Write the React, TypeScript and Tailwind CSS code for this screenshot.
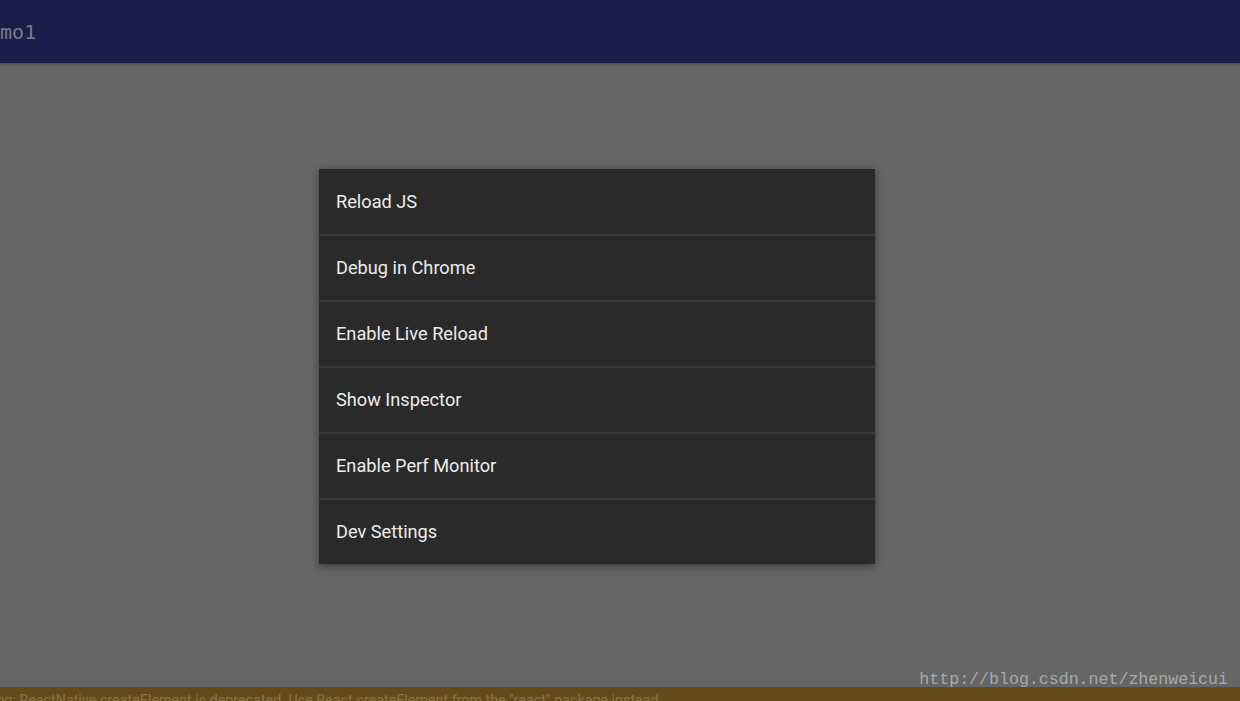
const items = [
  "Reload JS",
  "Debug in Chrome",
  "Enable Live Reload",
  "Show Inspector",
  "Enable Perf Monitor",
  "Dev Settings",
];

export default function App() {
  return (
    <div className="relative flex h-[701px] w-full flex-col overflow-hidden bg-[#666666]">
      <header className="z-10 flex h-[63px] shrink-0 items-center bg-[#1a1f4a] shadow-[0_1px_3px_rgba(0,0,0,0.35)]">
        <span className="-ml-[24px] font-['DejaVu_Sans_Mono',monospace] text-[20px] text-[#767a8c]">
          demo1
        </span>
      </header>

      <main className="flex-1 pl-[319px] pt-[106px]">
        <div className="w-[556px] bg-[#2a2a2a] shadow-[0_2px_8px_rgba(0,0,0,0.45)]">
          {items.map((label, i) => (
            <div
              key={label}
              className={
                "flex items-center px-[17px] font-['Roboto',sans-serif] text-[18.2px] text-[#ececec]" +
                (i > 0 ? " h-[66px] border-t-2 border-[#3a3a3a]" : " h-[65px]")
              }
            >
              {label}
            </div>
          ))}
        </div>
      </main>

      <div className="h-[14px] shrink-0 overflow-hidden bg-[#654b1a]">
        <p className="-ml-[40px] mt-[6px] whitespace-nowrap font-['Roboto',sans-serif] text-[14.3px] leading-none text-[#8a7348]">
          Warning: ReactNative.createElement is deprecated. Use React.createElement from the "react" package instead.
        </p>
      </div>

      <span className="absolute right-[12px] top-[668px] font-['Liberation_Mono',monospace] text-[16.6px] text-[#a8a8a8]">
        http://blog.csdn.net/zhenweicui
      </span>
    </div>
  );
}
